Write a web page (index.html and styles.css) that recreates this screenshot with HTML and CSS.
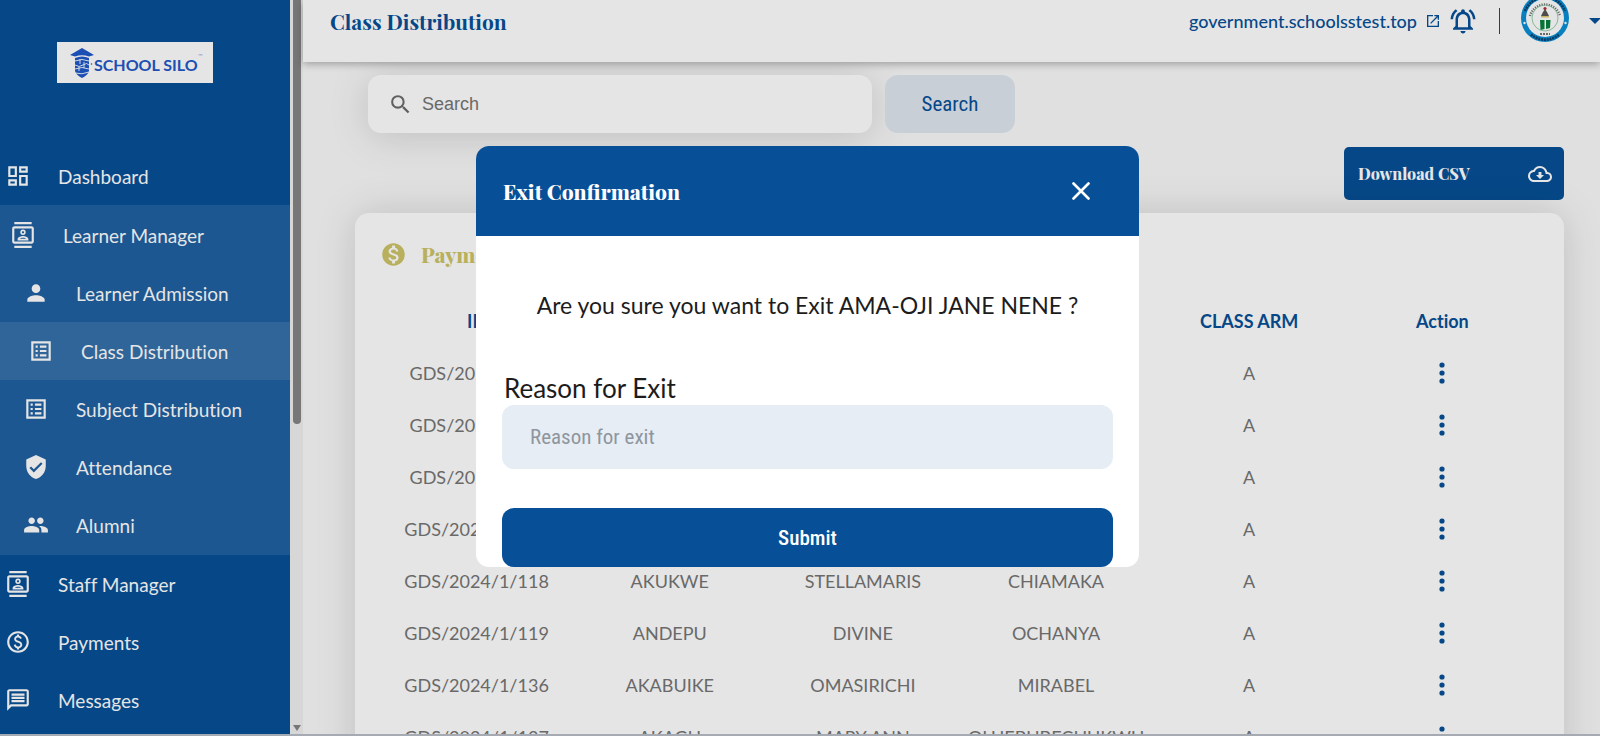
FILE: index.html
```html
<!DOCTYPE html>
<html lang="en">
<head>
<meta charset="utf-8">
<title>Class Distribution</title>
<link rel="stylesheet" href="styles.css">
</head>
<body>
<svg width="0" height="0" class="sprite" aria-hidden="true">
  <symbol id="i-dashboard" viewBox="0 0 24 24"><path d="M19 5v2h-4V5h4M9 5v6H5V5h4m10 8v6h-4v-6h4M9 17v2H5v-2h4M21 3h-8v6h8V3zM11 3H3v10h8V3zm10 8h-8v10h8V11zm-10 4H3v6h8v-6z"/></symbol>
  <symbol id="i-contacts" viewBox="0 0 24 24"><path d="M20 4H4c-1.100 0-2 .9-2 2v12c0 1.100.9 2 2 2h16c1.100 0 2-.9 2-2V6c0-1.100-.9-2-2-2zm0 14H4V6h16v12zM4 0h16v2H4zm0 22h16v2H4zm8-10a2.500 2.500 0 0 0 0-5 2.500 2.500 0 0 0 0 5zm0-3.500c.55 0 1 .45 1 1s-.45 1-1 1-1-.45-1-1 .45-1 1-1zm5 7.490C17 13.900 13.690 13 12 13s-5 .9-5 2.990V17h10v-1.010zm-8.190-.49c.61-.52 2.030-1 3.190-1 1.170 0 2.590.48 3.200 1H8.810z"/></symbol>
  <symbol id="i-person" viewBox="0 0 24 24"><path d="M12 12c2.210 0 4-1.790 4-4s-1.790-4-4-4-4 1.790-4 4 1.790 4 4 4zm0 2c-2.670 0-8 1.340-8 4v2h16v-2c0-2.660-5.330-4-8-4z"/></symbol>
  <symbol id="i-list" viewBox="0 0 24 24"><path d="M19 5v14H5V5h14m2-2H3v18h18V3zM11 7h6v2h-6V7zm0 4h6v2h-6v-2zm0 4h6v2h-6zM7 7h2v2H7zm0 4h2v2H7zm0 4h2v2H7z"/></symbol>
  <symbol id="i-shield" viewBox="0 0 24 24"><path d="M12 1 3 5v6c0 5.550 3.840 10.740 9 12 5.160-1.260 9-6.450 9-12V5l-9-4zm-2 16-4-4 1.410-1.410L10 14.170l6.590-6.590L18 9l-8 8z"/></symbol>
  <symbol id="i-people" viewBox="0 0 24 24"><path d="M16 11c1.660 0 2.990-1.340 2.990-3S17.660 5 16 5s-3 1.340-3 3 1.340 3 3 3zm-8 0c1.660 0 2.990-1.340 2.990-3S9.660 5 8 5 5 6.340 5 8s1.340 3 3 3zm0 2c-2.330 0-7 1.170-7 3.500V19h14v-2.500c0-2.330-4.670-3.500-7-3.500zm8 0c-.29 0-.62.02-.97.05 1.160.84 1.970 1.970 1.970 3.450V19h6v-2.500c0-2.330-4.670-3.500-7-3.500z"/></symbol>
  <symbol id="i-paid" viewBox="0 0 24 24"><path d="M12 2C6.480 2 2 6.480 2 12s4.480 10 10 10 10-4.480 10-10S17.520 2 12 2zm0 18c-4.410 0-8-3.590-8-8s3.590-8 8-8 8 3.590 8 8-3.590 8-8 8zm.89-8.900c-1.780-.59-2.640-.96-2.640-1.900 0-1.020 1.110-1.390 1.810-1.390 1.310 0 1.790.99 1.900 1.340l1.580-.67c-.15-.45-.82-1.920-2.540-2.240V5h-2v1.260c-2.480.56-2.490 2.860-2.490 2.960 0 2.270 2.250 2.910 3.350 3.310 1.580.56 2.280 1.070 2.280 2.030 0 1.130-1.050 1.610-1.980 1.610-1.820 0-2.340-1.870-2.400-2.090l-1.660.67c.63 2.190 2.280 2.780 2.900 2.960V19h2v-1.240c.4-.09 2.900-.59 2.900-3.220 0-1.390-.61-2.610-3.010-3.440z"/></symbol>
  <symbol id="i-money" viewBox="0 0 24 24"><path d="M12 2C6.480 2 2 6.480 2 12s4.480 10 10 10 10-4.480 10-10S17.520 2 12 2zm1.410 16.090V20h-2.670v-1.930c-1.710-.36-3.160-1.460-3.270-3.400h1.960c.1 1.050.82 1.870 2.650 1.870 1.960 0 2.400-.98 2.400-1.590 0-.83-.44-1.610-2.670-2.140-2.480-.6-4.180-1.620-4.180-3.670 0-1.720 1.390-2.840 3.110-3.210V4h2.670v1.950c1.860.45 2.790 1.860 2.850 3.390H14.300c-.05-1.110-.64-1.870-2.220-1.870-1.500 0-2.400.68-2.400 1.640 0 .84.65 1.390 2.670 1.910s4.180 1.390 4.180 3.910c-.01 1.830-1.380 2.830-3.120 3.160z"/></symbol>
  <symbol id="i-message" viewBox="0 0 24 24"><path d="M4 4h16v12H5.170L4 17.170V4m0-2c-1.100 0-1.990.9-1.990 2L2 22l4-4h14c1.100 0 2-.9 2-2V4c0-1.100-.9-2-2-2H4zm2 10h12v2H6v-2zm0-3h12v2H6V9zm0-3h12v2H6V6z"/></symbol>
  <symbol id="i-search" viewBox="0 0 24 24"><path d="M15.500 14h-.79l-.28-.27A6.470 6.470 0 0 0 16 9.500 6.500 6.500 0 1 0 9.500 16c1.610 0 3.090-.59 4.230-1.570l.27.28v.79l5 4.990L20.490 19l-4.990-5zm-6 0C7.010 14 5 11.990 5 9.500S7.010 5 9.500 5 14 7.010 14 9.500 11.990 14 9.500 14z"/></symbol>
  <symbol id="i-open" viewBox="0 0 24 24"><path d="M19 19H5V5h7V3H3v18h18v-9h-2v7zM14 3v2h3.590l-9.830 9.830 1.410 1.410L19 6.410V10h2V3h-7z"/></symbol>
  <symbol id="i-bell" viewBox="0 0 24 24"><path d="M12 22c1.100 0 2-.9 2-2h-4c0 1.100.9 2 2 2zm6-6v-5c0-3.070-1.630-5.640-4.500-6.320V4c0-.83-.67-1.500-1.500-1.500s-1.500.67-1.500 1.500v.68C7.640 5.360 6 7.920 6 11v5l-2 2v1h16v-1l-2-2zm-2 1H8v-6c0-2.480 1.510-4.500 4-4.500s4 2.020 4 4.500v6zM7.580 4.080 6.150 2.650C3.750 4.480 2.170 7.300 2.030 10.500h2c.15-2.650 1.510-4.970 3.550-6.420zm12.390 6.420h2c-.15-3.200-1.730-6.020-4.120-7.850l-1.420 1.430c2.020 1.450 3.390 3.770 3.540 6.420z"/></symbol>
  <symbol id="i-cloud" viewBox="0 0 24 24"><path d="M19.350 10.040A7.490 7.490 0 0 0 12 4C9.110 4 6.600 5.640 5.350 8.040A5.994 5.994 0 0 0 0 14c0 3.310 2.690 6 6 6h13c2.760 0 5-2.240 5-5 0-2.640-2.050-4.780-4.650-4.960zM19 18H6c-2.210 0-4-1.790-4-4 0-2.050 1.530-3.760 3.560-3.970l1.070-.11.5-.95A5.469 5.469 0 0 1 12 6c2.620 0 4.880 1.860 5.390 4.430l.3 1.500 1.530.11A2.980 2.980 0 0 1 22 15c0 1.650-1.350 3-3 3zm-5.550-8h-2.900v3H8l4 4 4-4h-2.550z"/></symbol>
  <symbol id="i-dots" viewBox="0 0 6 22"><circle cx="3" cy="3" r="2.600"/><circle cx="3" cy="11" r="2.600"/><circle cx="3" cy="19" r="2.600"/></symbol>
</svg>

<div class="app">
  <aside class="sidebar">
    <div class="brand">
      <div class="logo">
        <svg class="logo-mark" viewBox="0 0 24 30" aria-hidden="true">
          <path d="M12 0 24 7l-5 1.500Q12 6 5 8.500L0 7z" fill="#1f58c8"/>
          <path d="M5 10q7-3 14 0v13q-1 4-7 7-6-3-7-7z" fill="#1f58c8"/>
          <path d="M5 13q7-3 14 0M5 17q4 3 8 0t6 0M5 21q7-3 14 0M5 25q7 2 14-1M10 11v5M14 14v6M9 19v4" fill="none" stroke="#fff" stroke-width=".9"/>
          <circle cx="21.500" cy="16" r=".8" fill="#1f58c8"/>
        </svg>
        <span class="logo-text">SCHOOL SILO</span><sup class="logo-tm">™</sup>
      </div>
    </div>
    <nav class="menu">
      <a class="item" href="#"><svg class="icon"><use href="#i-dashboard"/></svg>Dashboard</a>
      <div class="group">
        <a class="item shifted" href="#"><svg class="icon"><use href="#i-contacts"/></svg>Learner Manager</a>
        <div class="submenu">
          <a class="item" href="#"><svg class="icon"><use href="#i-person"/></svg>Learner Admission</a>
          <a class="item shifted current" href="#"><svg class="icon"><use href="#i-list"/></svg>Class Distribution</a>
          <a class="item" href="#"><svg class="icon"><use href="#i-list"/></svg>Subject Distribution</a>
          <a class="item" href="#"><svg class="icon"><use href="#i-shield"/></svg>Attendance</a>
          <a class="item" href="#"><svg class="icon"><use href="#i-people"/></svg>Alumni</a>
        </div>
      </div>
      <a class="item" href="#"><svg class="icon"><use href="#i-contacts"/></svg>Staff Manager</a>
      <a class="item" href="#"><svg class="icon"><use href="#i-paid"/></svg>Payments</a>
      <a class="item" href="#"><svg class="icon"><use href="#i-message"/></svg>Messages</a>
    </nav>
  </aside>
  <div class="scroll-track"><div class="scroll-thumb"></div><div class="scroll-arrow"></div></div>

  <div class="page">
    <header class="topbar">
      <h1 class="title">Class Distribution</h1>
      <div class="account">
        <a class="site" href="#">government.schoolsstest.top <svg class="icon-open"><use href="#i-open"/></svg></a>
        <button class="plain" aria-label="Notifications"><svg class="icon-bell"><use href="#i-bell"/></svg></button>
        <span class="divider"></span>
        <svg class="avatar" viewBox="0 0 50 50" role="img" aria-label="School crest">
          <circle cx="25" cy="25" r="24" fill="#0a8fd6"/>
          <path d="M5 18a21.500 21.500 0 0 1 40 0M11 41.500a21.500 21.500 0 0 0 28 0" fill="none" stroke="#0b3f6b" stroke-width="2.600" stroke-dasharray="2 .8"/>
          <circle cx="25" cy="25" r="19" fill="#fff"/>
          <path d="M10 23a15.500 15.500 0 0 1 30 0" fill="none" stroke="#777" stroke-width="2.400" stroke-dasharray="1.200 1.200"/>
          <circle cx="25" cy="25" r="13" fill="none" stroke="#7fc09a" stroke-width=".8"/>
          <path d="M20 27h4.500v9l-4 1zM30.500 27H26v9l4-1z" fill="#08803f"/>
          <path d="m23 19 2-3 2 3 2 4h-8z" fill="#555"/><circle cx="25" cy="15.500" r="1.600" fill="#a33"/>
          <path d="M21 23h8v1.500h-8z" fill="#d8c867"/>
          <path d="M20 41h10" stroke="#777" stroke-width="2" stroke-dasharray="2 1"/>
          <circle cx="4.500" cy="30" r="1.200" fill="#fff"/><circle cx="45.500" cy="30" r="1.200" fill="#fff"/>
        </svg>
        <button class="plain caret-button" aria-label="Account menu"><span class="caret"></span></button>
      </div>
    </header>

    <main class="content">
      <form class="search">
        <label class="search-box"><svg class="icon-search"><use href="#i-search"/></svg><input type="text" placeholder="Search" aria-label="Search"></label>
        <button class="search-button" type="button">Search</button>
      </form>
      <button class="download">Download CSV <svg class="icon-cloud"><use href="#i-cloud"/></svg></button>
      <section class="card">
        <h2 class="card-title"><svg class="icon-money"><use href="#i-money"/></svg>Payments</h2>
        <table class="students">
          <thead><tr><th>ID</th><th></th><th></th><th></th><th>CLASS ARM</th><th>Action</th></tr></thead>
          <tbody>
            <tr><td>GDS/2024/1/18</td><td></td><td></td><td></td><td>A</td><td><button class="plain" aria-label="Actions"><svg class="dots"><use href="#i-dots"/></svg></button></td></tr>
            <tr><td>GDS/2024/1/27</td><td></td><td></td><td></td><td>A</td><td><button class="plain" aria-label="Actions"><svg class="dots"><use href="#i-dots"/></svg></button></td></tr>
            <tr><td>GDS/2024/1/64</td><td></td><td></td><td></td><td>A</td><td><button class="plain" aria-label="Actions"><svg class="dots"><use href="#i-dots"/></svg></button></td></tr>
            <tr><td>GDS/2024/1/117</td><td></td><td></td><td></td><td>A</td><td><button class="plain" aria-label="Actions"><svg class="dots"><use href="#i-dots"/></svg></button></td></tr>
            <tr><td>GDS/2024/1/118</td><td>AKUKWE</td><td>STELLAMARIS</td><td>CHIAMAKA</td><td>A</td><td><button class="plain" aria-label="Actions"><svg class="dots"><use href="#i-dots"/></svg></button></td></tr>
            <tr><td>GDS/2024/1/119</td><td>ANDEPU</td><td>DIVINE</td><td>OCHANYA</td><td>A</td><td><button class="plain" aria-label="Actions"><svg class="dots"><use href="#i-dots"/></svg></button></td></tr>
            <tr><td>GDS/2024/1/136</td><td>AKABUIKE</td><td>OMASIRICHI</td><td>MIRABEL</td><td>A</td><td><button class="plain" aria-label="Actions"><svg class="dots"><use href="#i-dots"/></svg></button></td></tr>
            <tr><td>GDS/2024/1/137</td><td>AKAGU</td><td>MARY ANN</td><td>OLUEBUBECHUKWU</td><td>A</td><td><button class="plain" aria-label="Actions"><svg class="dots"><use href="#i-dots"/></svg></button></td></tr>
          </tbody>
        </table>
      </section>
    </main>
  </div>
</div>

<div class="overlay">
  <div class="modal" role="dialog" aria-labelledby="modal-title">
    <div class="modal-head">
      <h2 class="modal-title" id="modal-title">Exit Confirmation</h2>
      <button class="plain close" aria-label="Close"><svg class="icon-close" viewBox="0 0 18 18"><path d="m1.500 1.500 15 15m0-15-15 15" fill="none" stroke="currentColor" stroke-width="2.600" stroke-linecap="round"/></svg></button>
    </div>
    <form class="modal-body">
      <p class="question">Are you sure you want to Exit AMA-OJI JANE NENE ?</p>
      <label class="field-label" for="reason">Reason for Exit</label>
      <input class="field" id="reason" type="text" placeholder="Reason for exit">
      <button class="submit" type="button">Submit</button>
    </form>
  </div>
</div>
</body>
</html>
```
FILE: styles.css
```css
:root {
  --primary: #075098;
  --display: "Playfair Display", "Liberation Serif", serif;
  --condensed: "Roboto Condensed", "Liberation Sans Narrow", Roboto, sans-serif;
}

* { box-sizing: border-box; }

body {
  margin: 0;
  font-family: Lato, sans-serif;
  font-variant-ligatures: none;
  background: #fafafa;
}

h1, h2, p { margin: 0; }
a { color: inherit; text-decoration: none; }
svg { display: block; flex: none; fill: currentColor; }
.sprite { position: absolute; }
.plain { padding: 0; border: 0; background: none; color: inherit; }

.app {
  display: flex;
  height: 100vh;
  overflow: hidden;
  border-bottom: 2px solid #b9bec8;
}

/* Sidebar */
.sidebar {
  flex: 0 0 290px;
  overflow: hidden;
  background: var(--primary);
  color: #fff;
}
.brand { padding: 42px 0 64px 57px; }
.logo {
  display: flex;
  align-items: center;
  width: 156px;
  height: 41px;
  padding-left: 13px;
  background: #fff;
  color: #1f58c8;
}
.logo-mark { width: 24px; height: 30px; }
.logo-text { padding-top: 3px; font-size: 16px; font-weight: 700; white-space: nowrap; }
.logo-tm { align-self: flex-start; margin-top: 10px; font-size: 6px; line-height: 8px; opacity: .5; }

.item {
  display: flex;
  align-items: center;
  gap: 27px;
  height: 58px;
  padding-left: 5px;
  font-size: 19px;
}
.item .icon { width: 26px; height: 26px; }
.group { padding: 1px 0; background: rgba(255, 255, 255, .1); }
.submenu .item { padding-left: 23px; }
.item.shifted { padding-left: 10px; }
.submenu .item.shifted { padding-left: 28px; }
.current { background: rgba(255, 255, 255, .1); }

.scroll-track {
  display: flex;
  flex: 0 0 13px;
  flex-direction: column;
  align-items: center;
  justify-content: space-between;
  padding-bottom: 3px;
  background: #f0f0f0;
}
.scroll-thumb { width: 8px; height: 58%; border-radius: 0 0 4px 4px; background: #858585; }
.scroll-arrow { border: 4px solid transparent; border-top: 6px solid #858585; border-bottom: 0; }

/* Top bar */
.page { flex: 1; min-width: 0; }
.topbar {
  position: relative;
  display: flex;
  justify-content: space-between;
  height: 62px;
  padding: 0 0 20px 27px;
  background: #fff;
  box-shadow: 0 2px 8px rgba(0, 0, 0, .3);
  color: var(--primary);
}
.title { font: 700 21px/42px var(--display); }
.account { display: flex; align-items: center; }
.site { display: flex; align-items: center; gap: 8px; font-size: 18px; font-weight: 500; }
.icon-open { width: 16px; height: 16px; }
.icon-bell { width: 30px; height: 30px; margin-left: 7px; }
.divider { width: 1px; height: 26px; margin: 0 20px 0 21px; background: var(--primary); }
.avatar { width: 50px; height: 50px; margin-top: -6px; }
.caret-button { overflow: hidden; width: 11px; margin-left: 19px; }
.caret { display: block; width: 0; border: 6px solid transparent; border-top-color: var(--primary); border-bottom: 0; }

/* Content */
.content { padding: 13px 36px 0 52px; }
.search { display: flex; gap: 13px; padding-left: 13px; }
.search-box {
  display: flex;
  align-items: center;
  gap: 9px;
  width: 504px;
  height: 58px;
  padding-left: 20px;
  border-radius: 13px;
  background: #fff;
  box-shadow: 0 4px 40px rgba(0, 0, 0, .15);
  color: #6b6b6b;
}
.icon-search { width: 25px; height: 25px; }
.search-box input {
  flex: 1;
  min-width: 0;
  padding: 0;
  border: 0;
  outline: 0;
  background: none;
  font: 18px "Liberation Sans", Arial, sans-serif;
}
.search-box input::placeholder { color: #757575; }
.search-button {
  width: 130px;
  border: 0;
  border-radius: 13px;
  background: #e0e7f0;
  color: var(--primary);
  font: 21px var(--condensed);
}
.download {
  display: flex;
  align-items: center;
  justify-content: space-between;
  width: 220px;
  height: 53px;
  margin: 14px 0 13px auto;
  padding: 0 12px 0 14px;
  border: 0;
  border-radius: 5px;
  background: var(--primary);
  color: #fff;
  font: 800 16px var(--display);
}
.icon-cloud { width: 24px; height: 24px; }
.card {
  padding: 25px;
  border-radius: 14px 14px 0 0;
  background: #fff;
  box-shadow: 0 0 40px rgba(0, 0, 0, .15);
}
.card-title {
  display: flex;
  align-items: center;
  gap: 14px;
  height: 32px;
  color: #cdc567;
  font: 800 21px/32px var(--display);
}
.icon-money { width: 27px; height: 27px; }
.students { width: 100%; margin-top: 25px; border-collapse: collapse; table-layout: fixed; }
.students th, .students td { height: 52px; padding: 0; text-align: center; white-space: nowrap; }
.students th { color: var(--primary); font-size: 18px; font-weight: 700; }
.students td { color: #757575; font-size: 18px; }
.dots { width: 6px; height: 22px; }
.students .plain { display: block; margin: 0 auto; color: var(--primary); }

/* Dialog */
.overlay {
  position: fixed;
  inset: 0;
  display: flex;
  align-items: flex-start;
  justify-content: center;
  padding: 146px 0 0 15px;
  background: rgba(0, 0, 0, .1);
}
.modal {
  overflow: hidden;
  width: 663px;
  border-radius: 13px;
  background: #fff;
}
.modal-head {
  display: flex;
  align-items: center;
  justify-content: space-between;
  height: 90px;
  padding: 0 49px 0 27px;
  background: var(--primary);
  color: #fff;
}
.modal-title { font: 800 21px/30px var(--display); }
.icon-close { width: 18px; height: 18px; }
.modal-body { display: flex; flex-direction: column; padding: 54px 26px 0; color: #1c1c1c; }
.question { font-size: 23px; line-height: 30px; text-align: center; }
.field-label { margin-top: 52px; padding-left: 2px; font-size: 26px; line-height: 33px; }
.field {
  width: 100%;
  height: 64px;
  padding: 0 28px;
  border: 0;
  border-radius: 12px;
  outline: 0;
  background: #e6edf5;
  font: 21px var(--condensed);
}
.field::placeholder { color: #8f959d; }
.submit {
  height: 59px;
  margin-top: 39px;
  border: 0;
  border-radius: 12px;
  background: var(--primary);
  color: #fff;
  font: 500 21px var(--condensed);
}
```
